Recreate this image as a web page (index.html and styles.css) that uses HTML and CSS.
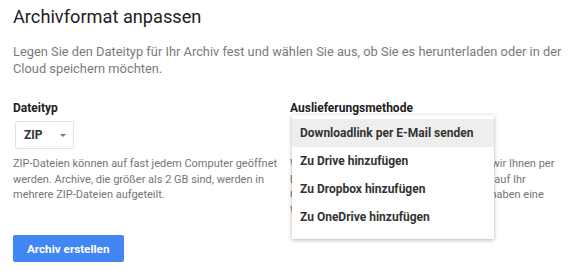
FILE: index.html
```html
<!DOCTYPE html>
<html lang="de">
<head>
  <meta charset="UTF-8">
  <title>Archivformat anpassen</title>
  <link rel="stylesheet" href="styles.css">
</head>
<body>

  <!-- HEADER -->
  <h1>Archivformat anpassen</h1>
  <p class="intro">
    Legen Sie den Dateityp für Ihr Archiv fest und wählen Sie aus, ob Sie es herunterladen oder in der
    Cloud speichern möchten.
  </p>

  <!-- OPTIONS -->
  <div class="options">
    <div class="option">
      <div class="label">Dateityp</div>
      <div class="select">
        <span>ZIP</span>
        <span class="arrow"></span>
      </div>
      <p class="help">
        ZIP-Dateien können auf fast jedem Computer geöffnet
        werden. Archive, die größer als 2 GB sind, werden in
        mehrere ZIP-Dateien aufgeteilt.
      </p>
    </div>

    <div class="option">
      <div class="label">Auslieferungsmethode</div>
      <!-- closed select sits under the open menu -->
      <div class="select open">
        <span>Downloadlink per E-Mail senden</span>
        <span class="arrow"></span>
      </div>
      <p class="help">
        Wenn das Archiv erstellt wurde, schicken wir Ihnen per<br>
        E-Mail einen Link zum Herunterladen, nun auf Ihr<br>
        Computer. Anschließend haben Sie dann haben eine<br>
        Woche Zeit zum Herunterladen.
      </p>

      <ul class="menu">
        <li class="active">Downloadlink per E-Mail senden</li>
        <li>Zu Drive hinzufügen</li>
        <li>Zu Dropbox hinzufügen</li>
        <li>Zu OneDrive hinzufügen</li>
      </ul>
    </div>
  </div>

  <button class="create">Archiv erstellen</button>

</body>
</html>
```

FILE: styles.css
```css
* {
  box-sizing: border-box;
}

body {
  margin: 0;
  padding: 0 13px;
  font-family: Roboto, "Liberation Sans", sans-serif;
  background: #fff;
  color: #212121;
}

/* HEADER */
h1 {
  margin: 5px 0 0;
  font-size: 18.2px;
  font-weight: 400;
  line-height: 24px;
}

.intro {
  margin: 14px 0 0;
  font-size: 12.85px;
  line-height: 17px;
  color: #7a7a7a;
}

/* OPTIONS */
.options {
  display: grid;
  grid-template-columns: 1fr 1fr;
  margin-top: 23px;
}

.option {
  position: relative;
}

.label {
  font-size: 12px;
  font-weight: 700;
  line-height: 16px;
}

.select {
  display: flex;
  align-items: center;
  gap: 17px;
  width: fit-content;
  height: 28px;
  margin: 5px 0 0 2px;
  padding: 0 7px 0 8px;
  border: 1px solid #e3e3e3;
  border-radius: 2px;
  font-size: 12px;
  font-weight: 700;
  color: #333;
}

.select.open {
  visibility: hidden;
}

.arrow {
  width: 0;
  height: 0;
  border-left: 3px solid transparent;
  border-right: 3px solid transparent;
  border-top: 3px solid #777;
}

.help {
  margin: 7px 0 0;
  font-size: 11px;
  line-height: 15.5px;
  color: #757575;
}

/* DROPDOWN MENU */
.menu {
  position: absolute;
  top: 15px;
  left: 2px;
  width: 202px;
  margin: 0;
  padding: 4px 0 8px;
  list-style: none;
  background: #fff;
  box-shadow: 0 1px 4px rgba(0, 0, 0, 0.3);
}

.menu li {
  height: 28px;
  padding: 0 8px;
  font-size: 12px;
  font-weight: 700;
  line-height: 28px;
  color: #333;
}

.menu li.active {
  background: #eee;
}

/* BUTTON */
.create {
  margin-top: 17px;
  height: 27px;
  padding: 0 14px;
  border: none;
  border-radius: 2px;
  background: #4285f4;
  color: #fff;
  font-family: inherit;
  font-size: 11.7px;
  font-weight: 700;
}
```
